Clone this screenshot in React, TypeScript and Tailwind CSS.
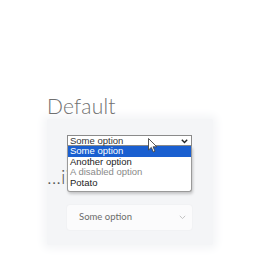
export default function App() {
  const options = [
    { label: "Some option", active: true },
    { label: "Another option" },
    { label: "A disabled option", disabled: true },
    { label: "Potato" },
  ];

  return (
    <div className="relative h-[256px] w-[256px] overflow-hidden bg-white pl-[47px] pt-[94px]">
      <h1 className="font-['Lato',sans-serif] text-[21px] font-light leading-[24px] tracking-[0.2px] text-[#707070]">
        Default
      </h1>

      {/* panel */}
      <div className="mt-[1px] w-[166px] rounded-[2px] bg-[#f4f5f7] pb-[15px] pl-[20px] pr-[21px] pt-[16px] shadow-[0_0_8px_4px_#f4f5f7]">
        <div className="relative">
          <div className="flex h-[11px] items-center justify-between border border-[#8a8a8a] bg-white pl-[2px] pr-[3px] font-['Liberation_Sans',Arial,sans-serif] text-[9.5px] leading-none text-[#333]">
            <span>Some option</span>
            <svg width="7" height="5" viewBox="0 0 7 5" className="mt-[1px]">
              <path d="M0.8 0.8 L3.5 3.6 L6.2 0.8" fill="none" stroke="#222" strokeWidth="1.4" />
            </svg>
          </div>

          {/* open list */}
          <div className="absolute left-0 top-[11px] z-10 w-full overflow-hidden rounded-b-[3px] border border-t-0 border-[#9a9a9a] bg-white pb-[2px] font-['Liberation_Sans',Arial,sans-serif] text-[9.5px] leading-[10.7px] shadow-[1px_2px_3px_rgba(0,0,0,0.2)]">
            {options.map((o) => (
              <div
                key={o.label}
                className={
                  o.active
                    ? "bg-[#1a5fd0] pl-[2px] text-white"
                    : o.disabled
                      ? "pl-[2px] text-[#8a8a8a]"
                      : "pl-[2px] text-[#222]"
                }
              >
                {o.label}
              </div>
            ))}
          </div>
        </div>

        <div className="-ml-[20px] mt-[15px] h-[30px] font-['Lato',sans-serif] text-[20px] font-light leading-[30px] text-[#555]">
          ...ii
        </div>

        <div className="mt-[14px] flex h-[25px] items-center justify-between rounded-[3px] bg-[#fbfbfc] pl-[12px] pr-[6px] font-['Lato',sans-serif] text-[9.5px] text-[#6b6b6b] shadow-[0_0_2px_rgba(0,0,0,0.06)]">
          <span>Some option</span>
          <svg width="7" height="5" viewBox="0 0 7 5">
            <path d="M0.8 0.8 L3.5 3.6 L6.2 0.8" fill="none" stroke="#c4c4c4" strokeWidth="1" />
          </svg>
        </div>
      </div>

      {/* mouse cursor */}
      <svg
        width="11"
        height="16"
        viewBox="0 0 11 16"
        className="absolute left-[148px] top-[138px] z-20"
      >
        <path
          d="M0.5 0.5 L0.5 12 L3.3 9.4 L5.3 14 L7 13.2 L5.1 8.8 L8.8 8.8 Z"
          fill="#fff"
          stroke="#444"
          strokeWidth="0.9"
          strokeLinejoin="round"
        />
      </svg>
    </div>
  );
}
